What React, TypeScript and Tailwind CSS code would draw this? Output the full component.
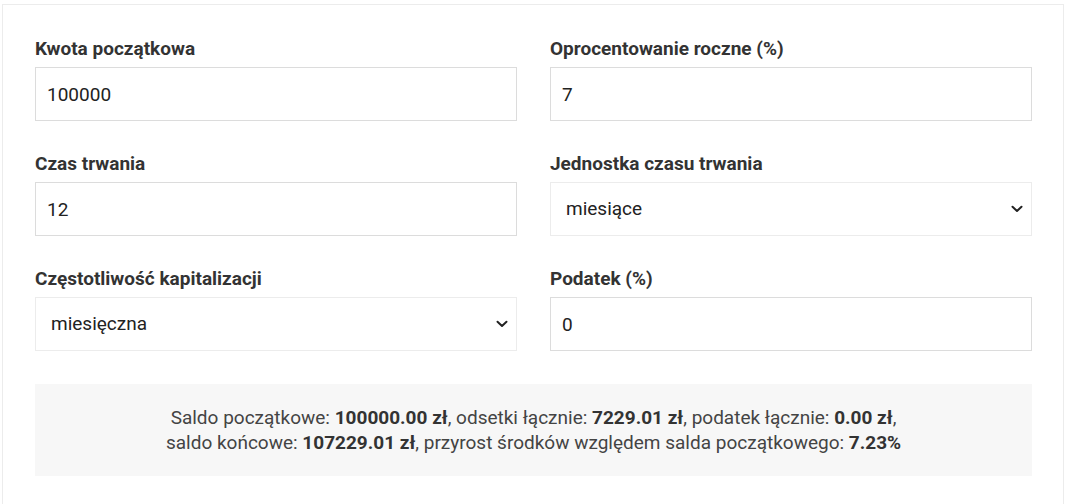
import React from "react";

const font = { fontFamily: "Roboto, 'Noto Sans', sans-serif" };

function Label({ children }: { children: React.ReactNode }) {
  return <label className="block text-[19px] leading-[24px] font-bold text-[#333] mb-[6px]">{children}</label>;
}

function TextField({ label, value }: { label: string; value: string }) {
  return (
    <div>
      <Label>{label}</Label>
      <input
        readOnly
        value={value}
        className="block w-full h-[54px] border border-[#dcdcdc] bg-white pl-[11px] pr-3 text-[19px] text-[#222] outline-none"
        style={font}
      />
    </div>
  );
}

function SelectField({ label, value }: { label: string; value: string }) {
  return (
    <div>
      <Label>{label}</Label>
      <div className="relative">
        <select
          value={value}
          onChange={() => {}}
          className="block w-full h-[54px] appearance-none border border-[#ececec] bg-white pl-[15px] pr-10 text-[19px] text-[#222] outline-none"
          style={font}
        >
          <option value={value}>{value}</option>
        </select>
        <svg
          className="pointer-events-none absolute right-[9px] top-1/2 -translate-y-1/2"
          width="12"
          height="8"
          viewBox="0 0 12 8"
          fill="none"
        >
          <path d="M1.5 1.8 L6 6 L10.5 1.8" stroke="#222" strokeWidth="2" strokeLinecap="round" strokeLinejoin="round" />
        </svg>
      </div>
    </div>
  );
}

export default function App() {
  return (
    <div className="bg-white w-[1065px] h-[504px] overflow-hidden pt-[4px] pl-[2px]" style={font}>
      <div className="w-[1062px] min-h-[520px] border border-[#ececec] bg-white pl-[32px] pr-[31px] pt-[32px]">
        <div className="grid grid-cols-2 gap-x-[33px] gap-y-[31px]">
          <TextField label="Kwota początkowa" value="100000" />
          <TextField label="Oprocentowanie roczne (%)" value="7" />
          <TextField label="Czas trwania" value="12" />
          <SelectField label="Jednostka czasu trwania" value="miesiące" />
          <SelectField label="Częstotliwość kapitalizacji" value="miesięczna" />
          <TextField label="Podatek (%)" value="0" />
        </div>
        <div className="mt-[33px] bg-[#f7f7f7] py-[21px] text-center text-[19px] leading-[25px] text-[#444]">
          <p>
            Saldo początkowe: <b className="text-[#333]">100000.00 zł</b>, odsetki łącznie: <b className="text-[#333]">7229.01 zł</b>, podatek łącznie: <b className="text-[#333]">0.00 zł</b>,
            <br />
            saldo końcowe: <b className="text-[#333]">107229.01 zł</b>, przyrost środków względem salda początkowego: <b className="text-[#333]">7.23%</b>
          </p>
        </div>
      </div>
    </div>
  );
}
